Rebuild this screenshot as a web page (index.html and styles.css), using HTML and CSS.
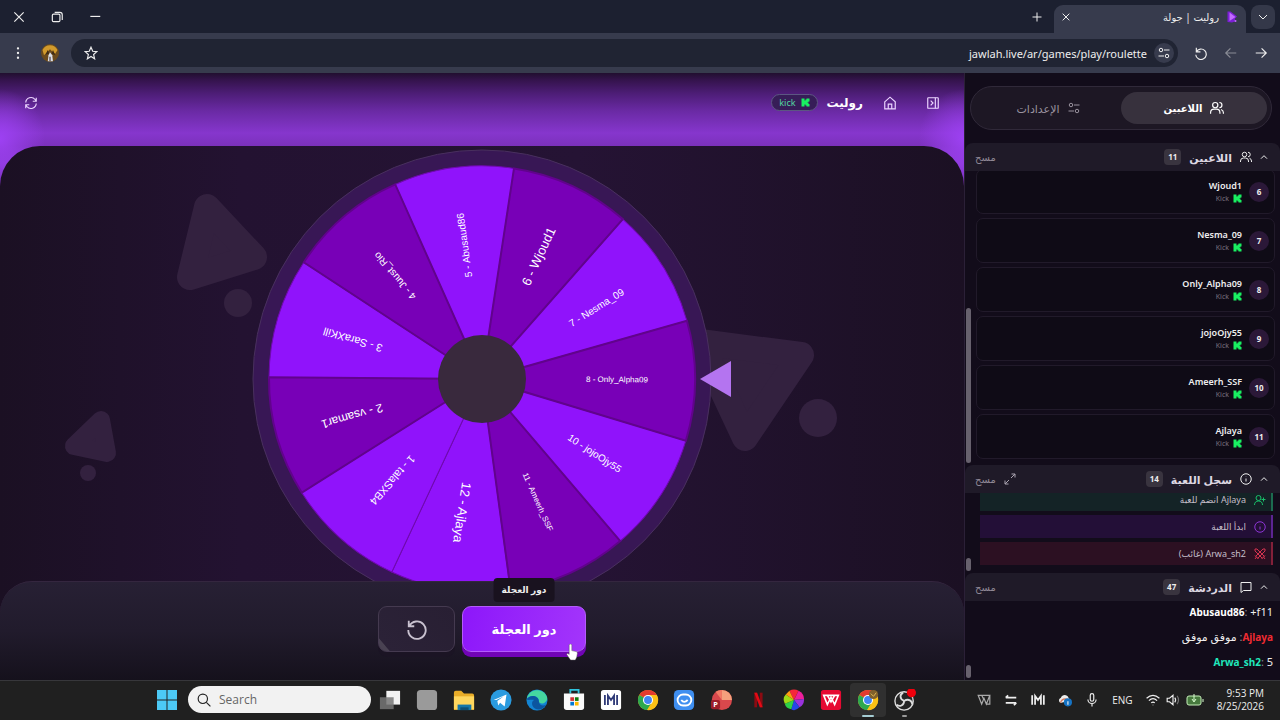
FILE: index.html
```
<!DOCTYPE html>
<html lang="ar" dir="rtl">
<head>
  <meta charset="UTF-8">
  <meta name="viewport" content="width=device-width, initial-scale=1.0">
  <title>روليت | جولة</title>
  <link rel="stylesheet" href="styles.css">
</head>
<body>

<!-- Shared icons -->
<svg class="sprite" aria-hidden="true">
  <symbol id="kick" viewBox="0 0 18 18"><path d="M1 1h6v4h2V3h2V1h6v6h-2v2h-2v1h2v2h2v5h-6v-2H9v-2H7v4H1z"/></symbol>
  <symbol id="users" viewBox="0 0 24 24"><circle cx="9" cy="7" r="4.5"/><path d="M1 22v-2a6 6 0 0 1 6-6h4a6 6 0 0 1 6 6v2M16 2.500a4.500 4.500 0 0 1 0 9M19 14.500a6 6 0 0 1 4 5.500v2"/></symbol>
  <symbol id="info" viewBox="0 0 24 24"><circle cx="12" cy="12" r="10.500"/><path d="M12 11v6M12 7v.5"/></symbol>
  <symbol id="up" viewBox="0 0 24 24"><path d="M3 17l9-9 9 9"/></symbol>
  <symbol id="sliders" viewBox="0 0 24 24"><circle cx="6" cy="6" r="3.500"/><path d="M12 6h11M1 18h11"/><circle cx="18" cy="18" r="3.500"/></symbol>
  <symbol id="chrome" viewBox="0 0 24 24">
    <circle cx="12" cy="12" r="11" fill="#fbc116"/>
    <path d="M12 12L2.500 6.500A11 11 0 0 1 21.500 6.500H12z" fill="#e33b2e"/>
    <path d="M2.500 6.500A11 11 0 0 0 11 23l5.500-9L12 12z" fill="#2da94f"/>
    <path d="M12 6.500h9.500A11 11 0 0 1 11 23l5.500-8z" fill="#fbc116"/>
    <circle cx="12" cy="12" r="5.500" fill="#fff"/><circle cx="12" cy="12" r="4.300" fill="#4285f4"/>
  </symbol>
  <symbol id="mm" viewBox="0 0 24 24"><path d="M2 4v16M7 20V5l5 7 5-7v15M22 4v16" fill="none" stroke-width="3"/></symbol>
</svg>

<!-- Browser window -->
<header class="tabstrip">
  <button class="tab-search" aria-label="بحث في علامات التبويب"><svg class="icon small" viewBox="0 0 24 24"><path d="M4 8l8 8 8-8"/></svg></button>
  <div class="tab">
    <svg class="favicon" viewBox="0 0 24 24"><path d="M3 1h6l13 10-4 4v6l-6 2-9-1z" fill="#7c1fd6"/><path d="M7 3l12 9-12 8z" fill="#c26bff"/><circle cx="19" cy="20" r="2" fill="#c26bff"/></svg>
    <span class="tab-title">روليت | جولة</span>
    <button class="plain" aria-label="إغلاق"><svg class="icon tiny" viewBox="0 0 24 24"><path d="M2 2l20 20M22 2L2 22"/></svg></button>
  </div>
  <button class="plain new-tab" aria-label="علامة تبويب جديدة"><svg class="icon small" viewBox="0 0 24 24"><path d="M12 3v18M3 12h18"/></svg></button>
  <div class="window-buttons">
    <button class="plain" aria-label="تصغير"><svg class="icon" viewBox="0 0 24 24"><path d="M4 11h17"/></svg></button>
    <button class="plain" aria-label="استعادة"><svg class="icon" viewBox="0 0 24 24"><rect x="4" y="7" width="13" height="13" rx="2"/><path d="M8 4h9a4 4 0 0 1 4 4v9"/></svg></button>
    <button class="plain" aria-label="إغلاق النافذة"><svg class="icon" viewBox="0 0 24 24"><path d="M4 4l16 16M20 4L4 20"/></svg></button>
  </div>
</header>

<nav class="toolbar">
  <button class="plain" aria-label="للأمام"><svg class="icon" viewBox="0 0 24 24"><path d="M3 12h18M13 4l8 8-8 8"/></svg></button>
  <button class="plain dim" aria-label="للخلف"><svg class="icon" viewBox="0 0 24 24"><path d="M21 12H3M11 4l-8 8 8 8"/></svg></button>
  <button class="plain" aria-label="إعادة التحميل"><svg class="icon" viewBox="0 0 24 24"><path d="M4 3v7h7M4 10a9 9 0 1 1-1 5"/></svg></button>
  <div class="address">
    <button class="site-info" aria-label="معلومات الموقع"><svg class="icon small" viewBox="0 0 24 24"><use href="#sliders"/></svg></button>
    <input class="url" type="text" dir="ltr" aria-label="العنوان" value="jawlah.live/ar/games/play/roulette">
    <button class="plain" aria-label="إضافة إشارة"><svg class="icon" viewBox="0 0 24 24"><path d="M12 2l3 7 7 .6-5.500 5 1.700 7.400-6.200-4-6.200 4 1.700-7.400-5.500-5L9 9z"/></svg></button>
  </div>
  <button class="plain" aria-label="الحساب">
    <svg class="avatar" viewBox="0 0 24 24"><circle cx="12" cy="12" r="12" fill="#6b4a1c"/><path d="M2 8a11 11 0 0 1 20 0l-3 5-4-3-3-3-4 4-4 4z" fill="#d19a2c"/><path d="M6 14l3-6 2 5zM14 13l2-5 3 7z" fill="#3f2b14"/><path d="M12 11l3 4 1 8H9l1-8z" fill="#dcdfe8"/><path d="M11 17h2v6h-2z" fill="#665e66"/></svg>
  </button>
  <button class="plain" aria-label="القائمة"><svg class="icon dots" viewBox="0 0 24 24"><circle cx="12" cy="4" r="1"/><circle cx="12" cy="12" r="1"/><circle cx="12" cy="20" r="1"/></svg></button>
</nav>

<main class="app">

  <!-- Side panel -->
  <aside class="sidebar">
    <div class="mode-tabs">
      <button class="mode active"><svg class="icon" viewBox="0 0 24 24"><use href="#users"/></svg>اللاعبين</button>
      <button class="mode"><svg class="icon small" viewBox="0 0 24 24"><use href="#sliders"/></svg>الإعدادات</button>
    </div>

    <section class="panel players">
      <div class="panel-head">
        <svg class="icon tiny" viewBox="0 0 24 24"><use href="#up"/></svg>
        <svg class="icon small" viewBox="0 0 24 24"><use href="#users"/></svg>
        <h2>اللاعبين</h2><span class="count">11</span>
        <button class="clear">مسح</button>
      </div>
      <ul class="player-list">
        <li class="player"><span class="number">6</span><div class="who"><b>Wjoud1</b><span class="source"><svg class="kick"><use href="#kick"/></svg>Kick</span></div></li>
        <li class="player"><span class="number">7</span><div class="who"><b>Nesma_09</b><span class="source"><svg class="kick"><use href="#kick"/></svg>Kick</span></div></li>
        <li class="player"><span class="number">8</span><div class="who"><b>Only_Alpha09</b><span class="source"><svg class="kick"><use href="#kick"/></svg>Kick</span></div></li>
        <li class="player"><span class="number">9</span><div class="who"><b>jojoOjy55</b><span class="source"><svg class="kick"><use href="#kick"/></svg>Kick</span></div></li>
        <li class="player"><span class="number">10</span><div class="who"><b>Ameerh_SSF</b><span class="source"><svg class="kick"><use href="#kick"/></svg>Kick</span></div></li>
        <li class="player"><span class="number">11</span><div class="who"><b>Ajlaya</b><span class="source"><svg class="kick"><use href="#kick"/></svg>Kick</span></div></li>
      </ul>
      <span class="thumb thumb-players"></span>
    </section>

    <section class="panel log">
      <div class="panel-head">
        <svg class="icon tiny" viewBox="0 0 24 24"><use href="#up"/></svg>
        <svg class="icon small" viewBox="0 0 24 24"><use href="#info"/></svg>
        <h2>سجل اللعبة</h2><span class="count">14</span>
        <button class="plain expand" aria-label="توسيع"><svg class="icon small" viewBox="0 0 24 24"><path d="M14 10l8-8M15 2h7v7M10 14l-8 8M2 15v7h7"/></svg></button>
        <button class="clear">مسح</button>
      </div>
      <ul class="log-list">
        <li class="entry join"><svg class="icon small" viewBox="0 0 24 24"><circle cx="9" cy="8" r="5"/><path d="M1 22c0-5 3-8 8-8s8 3 8 8M19 7v8M15 11h8"/></svg>Ajlaya انضم للعبة</li>
        <li class="entry began"><svg class="icon small" viewBox="0 0 24 24"><use href="#info"/></svg>ابدأ اللعبة</li>
        <li class="entry out"><svg class="icon small" viewBox="0 0 24 24"><path d="M2 2h4l15 15M22 2h-4L3 17M2 2v4l15 15M22 2v4L7 21M2 15l7 7M22 15l-7 7M5 18l-3 4M19 18l3 4"/></svg>Arwa_sh2 (غائب)</li>
      </ul>
      <span class="thumb"></span>
    </section>

    <section class="panel chat">
      <div class="panel-head">
        <svg class="icon tiny" viewBox="0 0 24 24"><use href="#up"/></svg>
        <svg class="icon small" viewBox="0 0 24 24"><path d="M2 3h20v16H7l-5 4z"/></svg>
        <h2>الدردشة</h2><span class="count">47</span>
        <button class="clear">مسح</button>
      </div>
      <ul class="chat-list">
        <li dir="ltr"><b class="white">Abusaud86</b><i>:</i> +f11</li>
        <li><b class="red">Ajlaya</b><i>:</i> موفق موفق</li>
        <li dir="ltr"><b class="teal">Arwa_sh2</b><i>:</i> 5</li>
      </ul>
      <span class="thumb"></span>
    </section>
  </aside>

  <!-- Game -->
  <section class="game">
    <div class="game-head">
      <button class="plain" aria-label="اللوحة الجانبية"><svg class="icon" viewBox="0 0 24 24"><rect x="3" y="3" width="18" height="18" rx="1"/><path d="M16 3v18M8 8l4 4-4 4"/></svg></button>
      <a class="home" href="#home" aria-label="الرئيسية"><svg class="icon" viewBox="0 0 24 24"><path d="M3 10l9-8 9 8v12H3zM9 22v-8h6v8"/></svg></a>
      <h1>روليت</h1>
      <span class="platform"><svg class="kick"><use href="#kick"/></svg>kick</span>
      <button class="plain refresh" aria-label="تحديث"><svg class="icon" viewBox="0 0 24 24"><path d="M3 11a9 9 0 0 1 16-5l2 3M21 3v6h-6M21 13a9 9 0 0 1-16 5l-2-3M3 21v-6h6"/></svg></button>
    </div>

    <div class="stage">
      <svg class="shapes" viewBox="0 0 964 435" preserveAspectRatio="xMidYMin slice">
        <g fill="#33213f" stroke="#33213f" stroke-width="26" stroke-linejoin="round">
          <path d="M207 61L254 111L190 131z"/>
          <path d="M700 196L801 209L745 292z"/>
          <path d="M101 274L107 307L74 300z" stroke-width="18"/>
        </g>
        <g fill="#33213f"><circle cx="238" cy="157" r="14"/><circle cx="88" cy="327" r="8"/><circle cx="818" cy="272" r="19"/></g>
      </svg>

      <svg class="wheel" viewBox="-230 -230 460 460">
        <defs><path id="slice" d="M0 0L204.400-60A213 213 0 0 1 204.400 60z"/></defs>
        <circle class="rim" r="229"/>
        <g transform="rotate(33.200)"><use href="#slice" class="light"/><text class="s10" x="135" y="4">10 - jojoOjy55</text></g>
        <g transform="rotate(98.700)"><use href="#slice" class="light"/><text class="s13" x="135" y="4">12 - Ajlaya</text></g>
        <g transform="rotate(131.400)"><use href="#slice" class="light"/><text class="s11" x="135" y="4">1 - talaSXB4</text></g>
        <g transform="rotate(196.800)"><use href="#slice" class="light"/><text class="s11" x="135" y="4">3 - SaraXKill</text></g>
        <g transform="rotate(262.300)"><use href="#slice" class="light"/><text class="s10" x="135" y="4">5 - Abusaud86</text></g>
        <g transform="rotate(327.800)"><use href="#slice" class="light"/><text class="s10" x="135" y="4">7 - Nesma_09</text></g>
        <g transform="rotate(0.500)"><use href="#slice" class="dark"/><text class="s8" x="135" y="2">8 - Only_Alpha09</text></g>
        <g transform="rotate(65.900)"><use href="#slice" class="dark"/><text class="s8" x="135" y="2">11 - Ameerh_SSF</text></g>
        <g transform="rotate(164.100)"><use href="#slice" class="dark"/><text class="s12" x="135" y="4">2 - vsamar1</text></g>
        <g transform="rotate(229.600)"><use href="#slice" class="dark"/><text class="s10" x="135" y="4">4 - Juust_Rio</text></g>
        <g transform="rotate(295)"><use href="#slice" class="dark"/><text class="s13" x="135" y="4">6 - Wjoud1</text></g>
        <circle class="hub" r="44"/>
        <path class="pointer" d="M218 0L249-18V18z"/>
      </svg>
    </div>

    <div class="controls">
      <div class="spin-wrap">
        <button class="btn spin" aria-describedby="tip">دور العجلة</button>
        <span class="tooltip" id="tip" role="tooltip">دور العجلة</span>
        <svg class="pointer-hand" viewBox="0 0 12 18"><path d="M3 1.500a1.400 1.400 0 0 1 2.800 0V7l4.500 1c1 .3 1.500 1 1.400 2L11 14l-1.500 3H4.500L.6 11.500c-.6-1 .6-2 1.500-1.200L3 11z" fill="#fff" stroke="#555" stroke-width=".5"/></svg>
      </div>
      <button class="btn reset" aria-label="إعادة"><svg class="icon large" viewBox="0 0 24 24"><path d="M3 3v6h6M3.500 9A9.500 9.500 0 1 1 2.500 13"/></svg></button>
    </div>
  </section>
</main>

<!-- Windows taskbar -->
<footer class="taskbar" dir="ltr">
  <button class="plain" aria-label="Start"><svg class="win" viewBox="0 0 20 20"><path d="M0 0h9.500v9.500H0zM10.500 0H20v9.500h-9.500zM0 10.500h9.500V20H0zM10.500 10.500H20V20h-9.500z" fill="#4cc9f5"/></svg></button>
  <label class="search"><svg class="icon" viewBox="0 0 24 24"><circle cx="10" cy="10" r="8"/><path d="M16 16l7 7"/></svg><input type="text" placeholder="Search" aria-label="Search"></label>
  <div class="apps">
    <button class="plain" aria-label="Task view"><svg viewBox="0 0 24 24"><path d="M8 2h15v15H8z" fill="#f1f1f1"/><path d="M1 9h15v13H1z" fill="#777" opacity=".85"/></svg></button>
    <button class="plain" aria-label="Desktop"><svg viewBox="0 0 24 24"><rect x="1" y="1" width="22" height="22" rx="4" fill="#9a9a9a"/></svg></button>
    <button class="plain" aria-label="Files"><svg viewBox="0 0 24 24"><path d="M1 4q0-2 2-2h6l3 3h9q2 0 2 2v16H1z" fill="#e9ad28"/><path d="M1 8h22v14H1z" fill="#ffd75e"/><path d="M5 17h15v6H5z" fill="#1677a8"/><path d="M8 20h9v3H8z" fill="#104f73"/></svg></button>
    <button class="plain" aria-label="Telegram"><svg viewBox="0 0 24 24"><circle cx="12" cy="12" r="11.500" fill="#2a9bdf"/><path d="M4 12l14-6-2 13-5-4-2 3-1-5 7-5-8 4z" fill="#fff"/></svg></button>
    <button class="plain" aria-label="Edge"><svg viewBox="0 0 24 24"><circle cx="12" cy="12" r="11.500" fill="#1384d3"/><path d="M1 10C4-2 20-1 23 9c1 6-7 9-9 5 1-5-6-9-13-4z" fill="#45d6a0"/><path d="M1 11c4-6 13-3 13 2 0 5 5 6 8 4-4 8-13 6-15 1-1-3 0-5 2-6-4-1-7 1-8-1z" fill="#0c559f"/></svg></button>
    <button class="plain" aria-label="Store"><svg viewBox="0 0 24 24"><path d="M8 5V1h9v4" fill="none" stroke="#2fc4dc" stroke-width="2"/><path d="M1 5h22v15q0 3-3 3H4q-3 0-3-3z" fill="#fafafa"/><path d="M8 9h4v4H8z" fill="#d13438"/><path d="M13 9h4v4h-4z" fill="#107c10"/><path d="M8 14h4v4H8z" fill="#0078d4"/><path d="M13 14h4v4h-4z" fill="#ffb900"/></svg></button>
    <button class="plain" aria-label="MM"><svg viewBox="0 0 24 24"><rect x="1" y="1" width="22" height="22" rx="3" fill="#fff"/><use href="#mm" x="4" y="4" width="16" height="16" stroke="#303b78"/></svg></button>
    <button class="plain" aria-label="Chrome"><svg viewBox="0 0 24 24"><use href="#chrome"/></svg></button>
    <button class="plain" aria-label="Assistant"><svg viewBox="0 0 24 24"><rect x="1" y="1" width="22" height="22" rx="5" fill="#3f8ff0"/><rect x="5" y="6" width="15" height="12" rx="6" fill="none" stroke="#fff" stroke-width="2"/><path d="M9 12q3 4 7 0" fill="none" stroke="#fff" stroke-width="2"/></svg></button>
    <button class="plain" aria-label="Picsart"><svg viewBox="0 0 24 24"><circle cx="13" cy="12" r="11" fill="#d9484c"/><path d="M13 1a11 11 0 0 1 11 11H13z" fill="#f5a07c"/><path d="M13 12L6 3a11 11 0 0 1 7-2z" fill="#f27a65"/><rect x="1" y="12" width="10" height="10" rx="2" fill="#9c1f2a"/><text x="6" y="20" class="glyph">P</text></svg></button>
    <button class="plain" aria-label="Netflix"><svg viewBox="0 0 24 24"><path d="M8 4h3v16H8z" fill="#8c0b12"/><path d="M14 4h3v16h-3z" fill="#8c0b12"/><path d="M8 4h3l6 16h-3z" fill="#e30a15"/></svg></button>
    <button class="plain" aria-label="Colors"><svg viewBox="0 0 24 24"><path d="M12 12L7 2q5-3 10 0z" fill="#f5273a"/><path d="M12 12L17 2q6 3 6 9z" fill="#ed1f9c"/><path d="M12 12l11-1q0 7-5 9z" fill="#9a32dd"/><path d="M12 12l6 8q-5 5-9 2z" fill="#2447e8"/><path d="M12 12L9 22q-6-1-7-6z" fill="#2bd14a"/><path d="M12 12L2 16q-3-6 1-10z" fill="#9fdb15"/><path d="M12 12L3 6l4-4z" fill="#ff9c12"/></svg></button>
    <button class="plain" aria-label="WPS"><svg viewBox="0 0 24 24"><rect x="1" y="1" width="22" height="22" rx="3" fill="#e60a32"/><path d="M4 7h16l-4 10-4-8-4 8zM8 7l4 7 4-7" fill="none" stroke="#fff" stroke-width="1.800"/></svg></button>
    <button class="plain running current" aria-label="Chrome"><svg viewBox="0 0 24 24"><use href="#chrome"/><circle cx="18" cy="6" r="5" fill="#80602b"/><path d="M15 5l3 3 3-4" stroke="#e4bd54" fill="none"/></svg></button>
    <button class="plain running" aria-label="OBS"><svg viewBox="0 0 24 24"><circle cx="11" cy="13" r="10" fill="#252525" stroke="#ddd" stroke-width="1.500"/><path d="M11 13c-5-2-5-7-1-9M11 13c5-3 9 0 9 4M11 13c0 5-5 7-8 4" fill="none" stroke="#ddd" stroke-width="2"/><circle cx="19" cy="4" r="5" fill="#f0000c"/></svg></button>
  </div>
  <div class="tray">
    <svg class="icon" viewBox="0 0 24 24"><path d="M2 4h20l-6 15-4-10-4 10zM8 4l4 8M22 4v15h-6" stroke="#aaa"/></svg>
    <svg class="icon bold" viewBox="0 0 24 24"><path d="M3 8h18M3 17h18M7 4L3 8M17 21l4-4"/></svg>
    <svg class="icon" viewBox="0 0 24 24"><use href="#mm"/></svg>
    <svg class="icon" viewBox="0 0 24 24"><path d="M4 17a5 5 0 0 1 1-9c2-6 11-6 13 0l3 5" fill="#ececec" stroke="none"/><path d="M4 17c2-6 7-8 13-6" fill="none" stroke="#d6795c"/><circle cx="17" cy="16" r="7" fill="#1573c4" stroke="none"/><path d="M17 14v6"/></svg>
    <svg class="icon" viewBox="0 0 24 24"><rect x="9" y="1" width="6" height="13" rx="3"/><path d="M5 11a7 7 0 0 0 14 0M12 18v5"/></svg>
    <span class="lang">ENG</span>
    <span class="status">
      <svg class="icon" viewBox="0 0 24 24"><path d="M1 9q11-10 22 0M5 13q7-7 14 0M9 17q3-3 6 0M12 20v1"/></svg>
      <svg class="icon" viewBox="0 0 24 24"><path d="M2 9h4l6-5v16l-6-5H2zM15 8q3 4 0 8"/><path d="M19 5q5 7 0 14" opacity=".4"/></svg>
      <svg class="battery" viewBox="0 0 18 12"><rect x="1" y="2" width="14" height="9" rx="2" fill="#477a3e" stroke="#c5efb9"/><path d="M17 5v3M8 0v7M6 5l2 3 2-3" fill="none" stroke="#d9ffcf"/></svg>
    </span>
    <time class="clock">9:53 PM<br>8/25/2026</time>
  </div>
</footer>

</body>
</html>
```
FILE: styles.css
```
* {
  box-sizing: border-box;
}

body {
  margin: 0;
  height: 100vh;
  display: flex;
  flex-direction: column;
  overflow: hidden;
  background: #120c1a;
  color: #eee;
  font-family: "Noto Sans", "DejaVu Sans", sans-serif;
  font-size: 12px;
}

h1, h2, ul {
  margin: 0;
  padding: 0;
}

ul {
  list-style: none;
}

button, input {
  font-family: inherit;
  color: inherit;
}

.sprite {
  width: 0;
  height: 0;
  position: absolute;
}

.icon {
  display: block;
  width: 14px;
  height: 14px;
  flex: none;
  fill: none;
  stroke: currentColor;
  stroke-width: 2;
}

.icon.small { width: 12px; height: 12px; }
.icon.tiny { width: 8px; height: 8px; stroke-width: 3; }
.icon.large { width: 22px; height: 22px; }
.icon.bold { stroke-width: 3; }
.icon.dots { fill: currentColor; }

.plain {
  padding: 0;
  border: 0;
  background: none;
  display: flex;
  align-items: center;
  justify-content: center;
}

.dim { opacity: 0.45; }

/* Browser window */
.tabstrip {
  flex: none;
  height: 33px;
  padding: 0 5px;
  display: flex;
  align-items: center;
  background: #1c2030;
}

.tab-search {
  width: 24px;
  height: 24px;
  padding: 0;
  border: 0;
  border-radius: 8px;
  background: #343849;
  display: flex;
  align-items: center;
  justify-content: center;
}

.tab {
  align-self: flex-end;
  width: 192px;
  height: 28px;
  margin-right: 5px;
  padding: 0 8px 5px;
  border-radius: 9px 9px 0 0;
  background: #373b4d;
  display: flex;
  align-items: center;
  gap: 7px;
}

.tab .plain { margin-right: auto; }
.favicon { width: 12px; height: 12px; }
.tab-title { font-size: 10px; }
.new-tab { margin-right: 11px; }

.window-buttons {
  margin-right: auto;
  padding-left: 7px;
  display: flex;
  gap: 24px;
}

.toolbar {
  flex: none;
  height: 40px;
  padding: 0 12px 0 11px;
  display: flex;
  align-items: center;
  gap: 16px;
  background: #373b4d;
}

.address {
  flex: 1;
  height: 28px;
  margin-left: -4px;
  padding: 0 4px 0 13px;
  border-radius: 14px;
  background: #202433;
  display: flex;
  align-items: center;
  gap: 7px;
}

.site-info {
  width: 20px;
  height: 20px;
  padding: 4px;
  border: 0;
  border-radius: 50%;
  background: #373b4d;
}

.url {
  flex: 1;
  min-width: 0;
  padding: 0;
  border: 0;
  background: none;
  font-size: 11px;
  text-align: right;
}

.avatar { width: 18px; height: 18px; }

/* App */
.app {
  flex: 1;
  min-height: 0;
  display: flex;
}

.sidebar {
  flex: 0 0 316px;
  display: flex;
  flex-direction: column;
  border-left: 1px solid #2b2037;
  background: #120c1a;
}

.mode-tabs {
  margin: 13px 8px 13px 5px;
  padding: 5px 4px;
  display: flex;
  border: 1px solid #302939;
  border-radius: 22px;
  background: #1d1724;
}

.mode {
  flex: 1;
  height: 32px;
  border: 0;
  border-radius: 16px;
  background: none;
  color: #9a939f;
  font-size: 11px;
  display: flex;
  align-items: center;
  justify-content: center;
  gap: 8px;
}

.mode.active {
  background: #37313d;
  color: #fff;
  font-size: 10px;
  font-weight: bold;
}

.panel {
  position: relative;
  min-height: 0;
  display: flex;
  flex-direction: column;
}

.players { flex: 1; }
.log { flex: 0 0 108px; }
.chat { flex: 0 0 107px; }

.panel-head {
  flex: none;
  height: 28px;
  padding: 0 12px 0 10px;
  display: flex;
  align-items: center;
  gap: 8px;
  border-radius: 8px 8px 0 0;
  background: #1f1a28;
}

.panel-head h2 {
  font-size: 11px;
  font-weight: bold;
  color: #ddd8e2;
}

.count {
  min-width: 16px;
  height: 16px;
  padding: 0 4px;
  border-radius: 4px;
  background: #39343f;
  font-size: 8px;
  font-weight: bold;
  line-height: 16px;
  text-align: center;
}

.clear {
  margin-right: auto;
  padding: 0;
  border: 0;
  background: none;
  color: #8f8895;
  font-size: 10px;
}

.expand {
  margin-right: auto;
  color: #aaa3b0;
}

.expand + .clear { margin-right: 0; }

.thumb {
  position: absolute;
  left: 1px;
  bottom: 2px;
  width: 5px;
  height: 13px;
  border-radius: 3px;
  background: #67616d;
}

.thumb-players { height: 155px; }

.player-list {
  flex: 1;
  min-height: 0;
  overflow: hidden;
  padding: 0 5px 6px 11px;
  display: flex;
  flex-direction: column;
  justify-content: flex-end;
  gap: 4px;
}

.player {
  flex: none;
  height: 45px;
  padding: 0 5px;
  display: flex;
  align-items: center;
  gap: 7px;
  border: 1px solid #211a2a;
  border-radius: 7px;
  background: #0f0b16;
}

.number {
  width: 20px;
  height: 20px;
  border-radius: 50%;
  background: #2b1838;
  font-size: 8px;
  font-weight: bold;
  line-height: 20px;
  text-align: center;
}

.who b {
  display: block;
  font-size: 9px;
  font-weight: 600;
  line-height: 14px;
}

.source {
  display: flex;
  align-items: center;
  gap: 4px;
  color: #77707e;
  font-size: 7px;
  line-height: 12px;
}

.kick {
  width: 9px;
  height: 9px;
  fill: #19f061;
}

.log-list {
  flex: 1;
  min-height: 0;
  overflow: hidden;
  padding: 0 7px 8px 15px;
  display: flex;
  flex-direction: column;
  justify-content: flex-end;
  gap: 4px;
}

.entry {
  flex: none;
  height: 23px;
  padding: 0 5px;
  display: flex;
  align-items: center;
  gap: 8px;
  border-right: 2px solid;
  color: #c5bec9;
  font-size: 9px;
}

.join { background: #142326; border-color: #1c6b4f; }
.join .icon { color: #19c16b; }
.began { background: #230f37; border-color: #5c2492; }
.began .icon { color: #8c35d4; }
.out { background: #2c1022; border-color: #822039; }
.out .icon { color: #d43350; }

.chat-list {
  padding: 0 7px;
  font-size: 11px;
}

.chat-list li {
  height: 25px;
  line-height: 21px;
  text-align: right;
}

.chat-list b { font-size: 10px; }
.chat-list i { color: #8f8895; font-style: normal; }
.white { color: #fff; }
.red { color: #ef2b32; }
.teal { color: #20e8bd; }

/* Game area */
.game {
  flex: 1;
  min-width: 0;
  display: flex;
  flex-direction: column;
  background:
    radial-gradient(ellipse 45px 50px at 0 66px, #9d41f2, transparent),
    radial-gradient(ellipse 45px 50px at 100% 66px, #9d41f2, transparent),
    linear-gradient(#210f2f, #34134c 7px, #4c1d75 20px, #6a2aa4 38px, #8636cd 60px, #7b31bb 73px, #8a38d4 90px, #6a2aa4 120px);
}

.game-head {
  flex: none;
  height: 73px;
  padding: 0 24px 14px;
  display: flex;
  align-items: center;
  color: #ecd6ff;
}

.home {
  margin-right: 29px;
  color: inherit;
}

.game-head h1 {
  margin-right: 20px;
  color: #fff;
  font-size: 12px;
}

.platform {
  height: 17px;
  margin-right: 9px;
  padding: 0 7px;
  display: flex;
  align-items: center;
  gap: 5px;
  border: 1px solid #5c5682;
  border-radius: 9px;
  background: #371d58;
  color: #53d6a0;
  font-size: 9px;
}

.refresh { margin-right: auto; }

/* The stage runs on behind the rounded corners of the controls */
.stage {
  flex: 1;
  min-height: 0;
  margin-bottom: -40px;
  overflow: hidden;
  display: grid;
  justify-items: center;
  align-items: start;
  border-radius: 40px 40px 0 0;
  background: linear-gradient(90deg, #1b1023, #231231 25%, #251334 60%, #1b1023);
}

.shapes {
  grid-area: 1 / 1;
  width: 100%;
  height: 435px;
}

.wheel {
  grid-area: 1 / 1;
  width: 460px;
  height: 460px;
  margin-top: 3px;
  overflow: visible;
  font-family: "Liberation Sans", Arial, sans-serif;
}

.wheel text {
  fill: #fff;
  text-anchor: middle;
  direction: ltr;
}

.rim { fill: #381755; stroke: #49305e; }
.hub { fill: #39293d; }
.light { fill: #9013fb; stroke: #6f0aad; }
.dark { fill: #7800b7; stroke: #61038c; stroke-width: 2; }
.pointer { fill: #b474f0; }
.s8 { font-size: 8px; }
.s10 { font-size: 10px; }
.s11 { font-size: 11px; }
.s12 { font-size: 12px; }
.s13 { font-size: 13px; }

.controls {
  position: relative;
  flex: none;
  height: 99px;
  padding-top: 24px;
  display: flex;
  align-items: flex-start;
  justify-content: center;
  gap: 7px;
  border-top: 1px solid #34263f;
  border-radius: 32px 32px 0 0;
  background: linear-gradient(#272034, #211b2c 50%, #15111c);
}

.spin-wrap { position: relative; }

.btn {
  height: 46px;
  border: 1px solid #453a50;
  border-radius: 9px;
  display: flex;
  align-items: center;
  justify-content: center;
}

.spin {
  width: 124px;
  border-color: #b45bfb;
  background: linear-gradient(100deg, #8d17fa, #a335fb);
  box-shadow: 0 5px 0 #7104b6;
  color: #fff;
  font-size: 13px;
  font-weight: bold;
}

.reset {
  width: 77px;
  background: linear-gradient(50deg, #494252 9%, #2b2237 10%, #281f33);
  box-shadow: 0 5px 0 #1b1424;
  color: #c9c2d0;
}

.tooltip {
  position: absolute;
  left: 50%;
  bottom: 50px;
  transform: translateX(-50%);
  padding: 0 8px;
  border-radius: 4px;
  background: #19121f;
  font-size: 9px;
  font-weight: bold;
  line-height: 24px;
  white-space: nowrap;
}

.pointer-hand {
  position: absolute;
  right: 8px;
  bottom: -9px;
  width: 12px;
  height: 17px;
}

/* Taskbar */
.taskbar {
  flex: none;
  height: 40px;
  padding: 0 16px 2px 157px;
  display: flex;
  align-items: center;
  border-top: 1px solid #37373b;
  background: #202020;
  font-family: "Open Sans", sans-serif;
}

.win { width: 20px; height: 20px; display: block; }

.search {
  flex: none;
  width: 183px;
  height: 27px;
  margin-left: 11px;
  padding: 0 9px;
  display: flex;
  align-items: center;
  gap: 8px;
  border-radius: 14px;
  background: #f2f2f2;
  color: #222;
}

.search input {
  width: 100%;
  padding: 0;
  border: 0;
  outline: 0;
  background: none;
  font-size: 12px;
}

.search input::placeholder { color: #666; }

.apps {
  flex: 0 0 551px;
  height: 100%;
  margin-left: 1px;
  display: flex;
  align-items: center;
}

.apps .plain {
  position: relative;
  flex: 1;
  height: 34px;
  border-radius: 4px;
}

.apps svg { width: 22px; height: 22px; }
.apps .current { background: #303030; }

.running::after {
  content: "";
  position: absolute;
  bottom: 0;
  width: 5px;
  height: 2px;
  border-radius: 1px;
  background: #999;
}

.current::after { width: 12px; background: #a5cdd3; }

.glyph {
  fill: #fff;
  font-size: 8px;
  font-weight: bold;
  text-anchor: middle;
}

.tray {
  margin-left: auto;
  display: flex;
  align-items: center;
  gap: 13px;
}

.lang { font-size: 10px; }

.status {
  display: flex;
  align-items: center;
  gap: 6px;
}

.battery { width: 18px; height: 12px; }

.clock {
  font-size: 10px;
  line-height: 13px;
  text-align: right;
}
```
